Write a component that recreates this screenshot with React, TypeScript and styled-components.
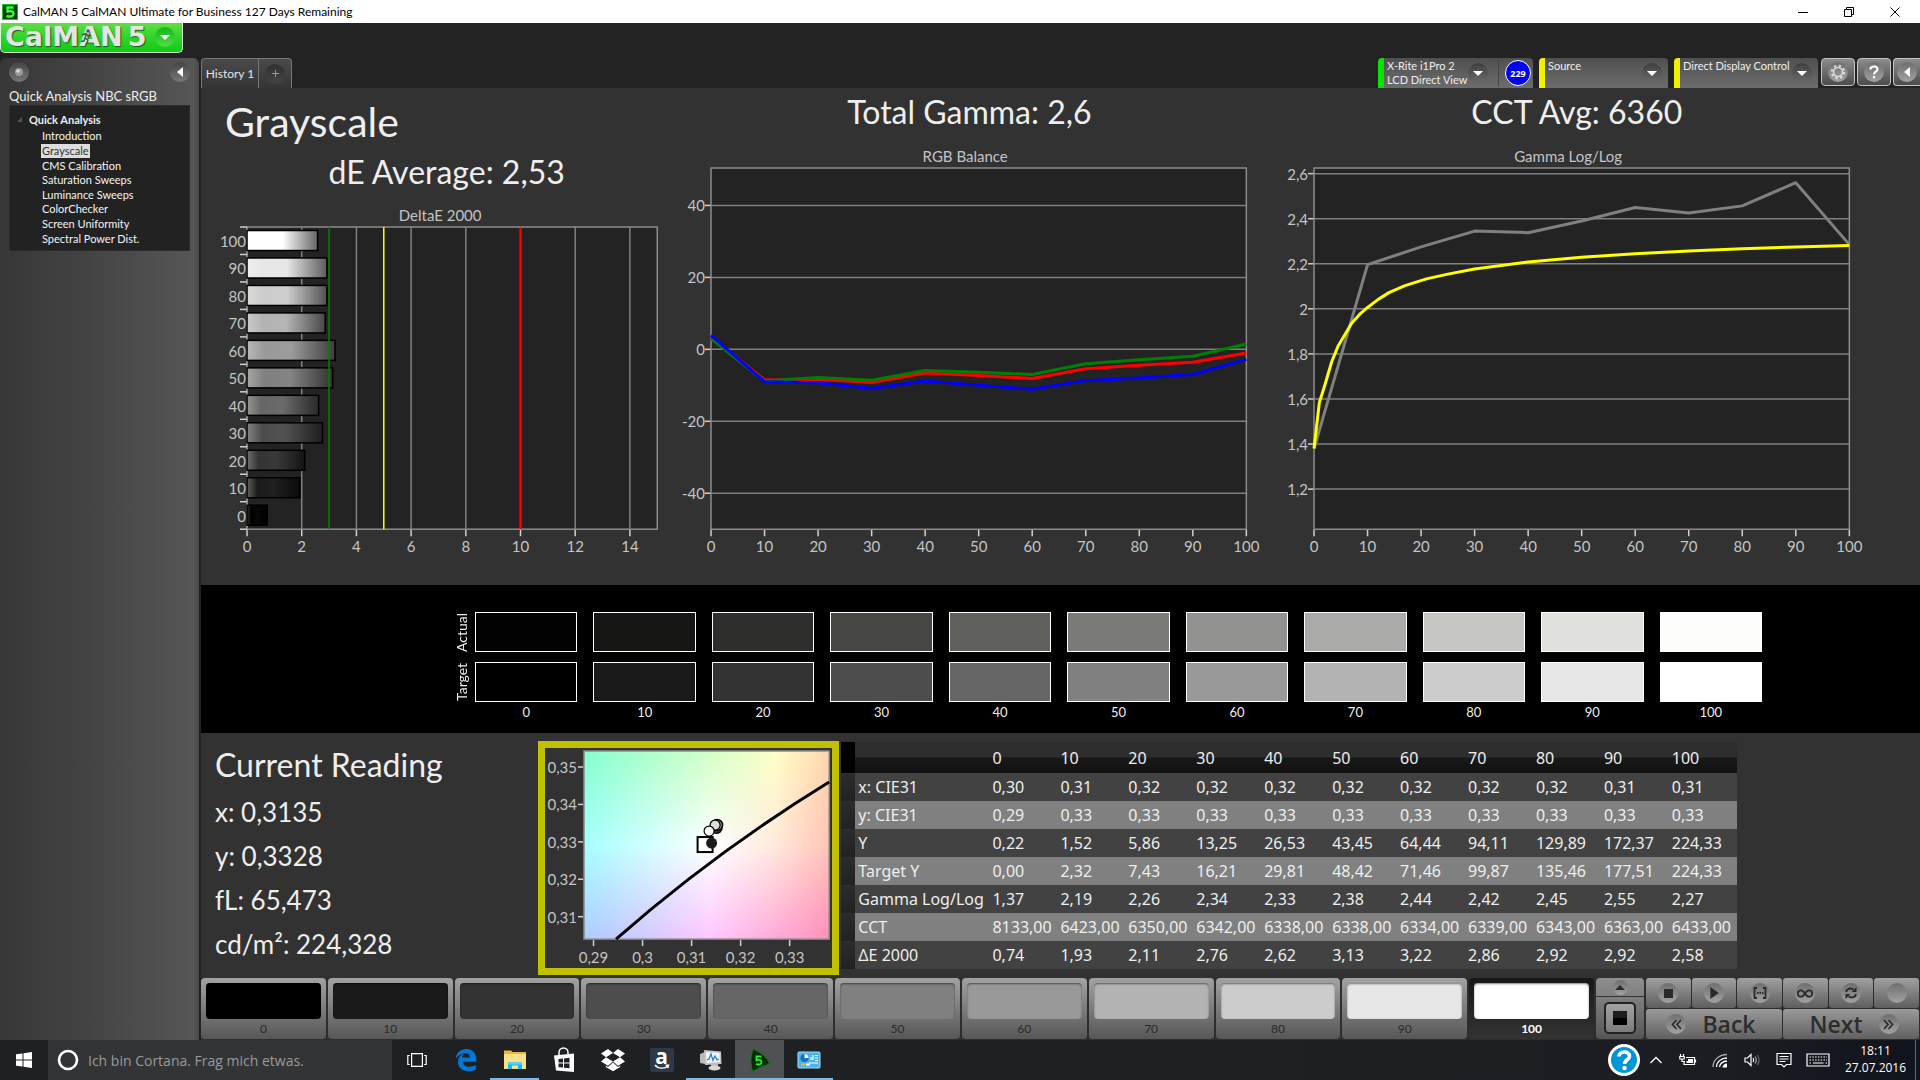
import React from 'react';
import styled, { createGlobalStyle } from 'styled-components';

const UI = `Lato, "Open Sans", "Liberation Sans", sans-serif`;
const SYS = `"Open Sans", "Noto Sans", "Liberation Sans", sans-serif`;

const GlobalStyle = createGlobalStyle`
  *, *::before, *::after { box-sizing: border-box; }
  body { margin: 0; background: #232323; color: #eee; font-family: ${UI}; }
  button { font: inherit; color: inherit; padding: 0; border: 0; background: none; cursor: pointer; }
  h1, h2, h3, p, ul { margin: 0; padding: 0; font-weight: 400; }
  ul { list-style: none; }
  svg { display: block; }
`;

/* ---------- data ---------- */

const LEVELS = [0, 10, 20, 30, 40, 50, 60, 70, 80, 90, 100];
const TARGET = ['#000000', '#1a1a1a', '#333333', '#4d4d4d', '#666666', '#808080', '#999999', '#b3b3b3', '#cccccc', '#e6e6e6', '#ffffff'];
const ACTUAL = ['#020202', '#161614', '#2e2e2c', '#464643', '#60605d', '#7a7a77', '#929290', '#aaaba8', '#c6c7c2', '#e0e1dc', '#fdfdfb'];
const DELTA_E = [0.74, 1.93, 2.11, 2.76, 2.62, 3.13, 3.22, 2.86, 2.92, 2.92, 2.58];

const RED = [3.4, -8.5, -8.3, -9.2, -6.6, -7.3, -8.1, -5.4, -4.4, -3.6, -1];
const GREEN = [3, -8.8, -7.8, -8.6, -5.9, -6.4, -7, -4, -2.9, -1.9, 1.5];
const BLUE = [3.9, -9, -9.3, -10.9, -8.8, -10, -11.1, -8.7, -8, -7, -2.8];
const GAMMA = [1.38, 2.196, 2.275, 2.345, 2.338, 2.39, 2.45, 2.425, 2.457, 2.56, 2.285];
const GAMMA_TARGET: [number, number][] = [
  [0, 1.38], [1, 1.585], [2, 1.66], [3.3, 1.765], [4.5, 1.835], [5.5, 1.875], [7, 1.935], [8.5, 1.975], [10, 2.006], [12, 2.042],
  [14, 2.072], [17, 2.103], [21, 2.133], [25, 2.154], [30, 2.177], [40, 2.208], [50, 2.229], [60, 2.245],
  [70, 2.257], [80, 2.267], [90, 2.275], [100, 2.281],
];

const READINGS = ['x: 0,3135', 'y: 0,3328', 'fL: 65,473', 'cd/m²: 224,328'];

const ROWS: [string, string[]][] = [
  ['x: CIE31', ['0,30', '0,31', '0,32', '0,32', '0,32', '0,32', '0,32', '0,32', '0,32', '0,31', '0,31']],
  ['y: CIE31', ['0,29', '0,33', '0,33', '0,33', '0,33', '0,33', '0,33', '0,33', '0,33', '0,33', '0,33']],
  ['Y', ['0,22', '1,52', '5,86', '13,25', '26,53', '43,45', '64,44', '94,11', '129,89', '172,37', '224,33']],
  ['Target Y', ['0,00', '2,32', '7,43', '16,21', '29,81', '48,42', '71,46', '99,87', '135,46', '177,51', '224,33']],
  ['Gamma Log/Log', ['1,37', '2,19', '2,26', '2,34', '2,33', '2,38', '2,44', '2,42', '2,45', '2,55', '2,27']],
  ['CCT', ['8133,00', '6423,00', '6350,00', '6342,00', '6338,00', '6338,00', '6334,00', '6339,00', '6343,00', '6363,00', '6433,00']],
  ['ΔE 2000', ['0,74', '1,93', '2,11', '2,76', '2,62', '3,13', '3,22', '2,86', '2,92', '2,92', '2,58']],
];

const PAGES = ['Introduction', 'Grayscale', 'CMS Calibration', 'Saturation Sweeps', 'Luminance Sweeps', 'ColorChecker', 'Screen Uniformity', 'Spectral Power Dist.'];

/* ---------- frame ---------- */

const Page = styled.div`
  min-height: 100vh;
  display: flex;
  flex-direction: column;
`;

const TitleBar = styled.header`
  height: 23px;
  display: flex;
  align-items: center;
  padding: 0 2px;
  background: #fff;
  color: #000;
  font-size: 12px;
`;

const WindowTitle = styled.span`
  flex: 1;
  padding-left: 5px;
`;

const WindowButton = styled.button`
  width: 46px;
  height: 22px;
  display: grid;
  place-items: center;
`;

const Brand = styled.div`
  height: 35px;
`;

const LogoButton = styled.button`
  position: relative;
  width: 183px;
  height: 30px;
  display: flex;
  align-items: center;
  gap: 5px;
  padding: 0 7px 2px 4px;
  border: 1px solid #d8f5d8;
  border-top: 0;
  border-radius: 0 0 5px 5px;
  background: linear-gradient(#63dd45, #2fd42a 50%, #10cc14);
`;

const LogoText = styled.span`
  font: 700 27px/27px "DejaVu Sans", sans-serif;
  color: #e4e4e4;
  text-shadow: 1px 1px 1px #1a5a1a;
`;

const LogoArrow = styled.span`
  width: 20px;
  height: 20px;
  display: grid;
  place-items: center;
  margin-left: auto;
  border-radius: 50%;
  background: linear-gradient(#0fb61c, #53de46);
`;

const Runner = styled.svg`
  position: absolute;
  left: 79px;
  top: 6px;
`;

const Workspace = styled.div`
  flex: 1;
  display: grid;
  grid-template-columns: 199px minmax(0, 1fr);
  gap: 2px;
`;

/* ---------- sidebar ---------- */

const Sidebar = styled.aside`
  padding: 4px 9px 0;
  border-radius: 6px 6px 0 0;
  background: linear-gradient(90deg, #373737, #444 45%, #565656 97%, #4a4a4a);
`;

const SidebarTools = styled.div`
  display: flex;
  justify-content: space-between;
`;

const RoundButton = styled.button`
  width: 20px;
  height: 20px;
  flex: none;
  display: grid;
  place-items: center;
  border-radius: 50%;
  background: linear-gradient(#444, #777);
`;

const SidebarTitle = styled.h2`
  padding: 6px 0 1px;
  font-size: 13px;
  line-height: 16px;
  white-space: nowrap;
`;

const Tree = styled.nav`
  height: 146px;
  padding: 7px 0 0;
  background: #222;
  border: 1px solid #2c2c2c;
  font-size: 11px;
  line-height: 14px;
`;

const TreeRoot = styled.div`
  display: flex;
  align-items: center;
  gap: 6px;
  padding-left: 7px;
  height: 14px;
  font-weight: 700;
`;

const TreeList = styled.ul`
  height: 117px;
  display: grid;
  grid-template-rows: repeat(8, 1fr);
  align-items: center;
  margin-top: 2px;
  padding-left: 31px;
`;

const TreeItem = styled.li`
  display: flex;
`;

const TreeLink = styled.a<{ $current: boolean }>`
  padding: 0 1px;
  color: ${(p) => (p.$current ? '#333' : '#f4f4f4')};
  background: ${(p) => (p.$current ? '#ddd' : 'transparent')};
  text-decoration: none;
`;

/* ---------- tabs and device selectors ---------- */

const Main = styled.main`
  display: flex;
  flex-direction: column;
  min-width: 0;
`;

const TopRow = styled.div`
  height: 30px;
  display: flex;
  align-items: flex-start;
  justify-content: space-between;
`;

const Tabs = styled.div`
  height: 30px;
  display: flex;
  border: 1px solid #777;
  border-bottom: 0;
  border-radius: 4px 4px 0 0;
  background: linear-gradient(#4a4a4a, #353535);
`;

const Tab = styled.button`
  width: 57px;
  font-size: 12px;
  color: #e4e4e4;
  border-right: 1px solid #777;
`;

const AddTab = styled.button`
  width: 32px;
  display: grid;
  place-items: center;
`;

const AddDisc = styled.span`
  width: 20px;
  height: 20px;
  display: grid;
  place-items: center;
  border-radius: 50%;
  background: linear-gradient(#303030, #444);
`;

const Devices = styled.div`
  display: flex;
  align-items: flex-start;
`;

const Device = styled.div<{ $accent: string; $width: number }>`
  width: ${(p) => p.$width}px;
  height: 30px;
  display: flex;
  align-items: center;
  margin-right: 6px;
  border-left: 6px solid ${(p) => p.$accent};
  border-radius: 4px 4px 0 0;
  background: linear-gradient(#505050, #6c6c6c);
  &:last-of-type { margin-right: 3px; }
`;

const DeviceButton = styled.button`
  flex: 1;
  height: 30px;
  display: flex;
  align-items: center;
  justify-content: space-between;
  padding: 0 6px 0 3px;
  text-align: left;
  font-size: 11px;
  line-height: 14px;
  white-space: nowrap;
`;

const DeviceName = styled.span`
  align-self: flex-start;
  padding-top: 1px;
`;

const ArrowDisc = styled.span`
  width: 20px;
  height: 20px;
  flex: none;
  display: grid;
  place-items: center;
  border-radius: 50%;
  background: linear-gradient(#404040, #6a6a6a);
`;

const Counter = styled.span`
  width: 26px;
  height: 26px;
  display: grid;
  place-items: center;
  margin: 0 2px 0 6px;
  border: 1px solid #fff;
  border-radius: 50%;
  background: #0000f4;
  font: 700 9px ${SYS};
  color: #fff;
`;

const CounterSlot = styled.span`
  margin-left: 4px;
  border-left: 1px solid #444;
`;

const ToolButton = styled.button<{ $open?: boolean }>`
  width: ${(p) => (p.$open ? 27 : 34)}px;
  height: 28px;
  display: grid;
  place-items: center;
  margin-right: ${(p) => (p.$open ? 0 : 2)}px;
  border: 1px solid #c4c4c4;
  border-right-width: ${(p) => (p.$open ? 0 : 1)}px;
  border-radius: ${(p) => (p.$open ? '4px 0 0 4px' : '4px')};
  background: linear-gradient(#8c8c8c, #4c4c4c);
`;

/* ---------- charts ---------- */

const Charts = styled.section`
  display: grid;
  grid-template-columns: 467fr 602fr 612fr;
  align-items: end;
  padding: 0 37px 21px 0;
  background: #323232;
`;

const Panel = styled.div`
  min-width: 0;
`;

const PageTitle = styled.h1`
  padding: 0 0 2px 24px;
  font-size: 41px;
  line-height: 48px;
`;

const Headline = styled.h2<{ $indent?: number }>`
  margin: 4px 0 12px;
  padding-left: ${(p) => p.$indent ?? 0}px;
  font-size: 32px;
  line-height: 40px;
  text-align: center;
`;

const Plot = styled.svg`
  width: 100%;
  height: auto;
  font-family: ${UI};
  font-size: 15px;
  fill: #c4c4c4;
`;

/* ---------- swatches ---------- */

const Swatches = styled.section`
  display: flex;
  flex-direction: column;
  gap: 10px;
  padding: 27px 158px 11px 252px;
  background: #000;
`;

const SwatchRow = styled.div`
  display: flex;
  gap: 4px;
`;

const SideLabel = styled.span`
  width: 18px;
  height: 40px;
  writing-mode: vertical-rl;
  transform: rotate(180deg);
  font-size: 14px;
  line-height: 18px;
  text-align: center;
`;

const SwatchCells = styled.div`
  flex: 1;
  display: grid;
  grid-template-columns: repeat(11, 1fr);
  column-gap: 16px;
  font-size: 13px;
  line-height: 20px;
  text-align: center;
`;

const Swatch = styled.div<{ $fill: string }>`
  height: 40px;
  border: 1px solid #fff;
  background: ${(p) => p.$fill};
`;

/* ---------- readings ---------- */

const Lower = styled.section`
  flex: 1;
  display: grid;
  grid-template-columns: 337fr 301fr 2fr 895fr 183fr;
  align-items: start;
  padding: 8px 0 2px;
  background: #323232;
`;

const Readings = styled.div`
  padding-left: 14px;
`;

const ReadingTitle = styled.h2`
  font-size: 32px;
  line-height: 47px;
`;

const Reading = styled.p`
  padding-top: 4px;
  font-size: 26px;
  line-height: 40px;
`;

const CieFrame = styled.div`
  border: 7px solid #c0c000;
  background: #323232;
`;

const DataTable = styled.table`
  grid-column: 4;
  width: 100%;
  margin-top: 1px;
  table-layout: fixed;
  border-collapse: collapse;
  font: 16px/20px "Noto Sans", ${SYS};
  white-space: nowrap;
`;

const HeadRow = styled.tr`
  height: 31px;
  background: linear-gradient(#2d2d2d 0 48%, #191919 52%, #111);
  text-align: left;
  th { font-weight: 400; padding: 0 3px; }
  th:first-child { background: #000; }
`;

const DataRow = styled.tr<{ $alt: boolean }>`
  height: 28px;
  background: ${(p) => (p.$alt ? '#808080' : '#424242')};
  text-align: left;
  th, td { font-weight: 400; padding: 0 3px; }
  td:first-child { background: linear-gradient(#2c2c2c, #222); }
`;

/* ---------- pattern bar ---------- */

const PatternBar = styled.section`
  display: flex;
  gap: 2px;
  padding: 0 1px 1px 0;
  background: #2e2e2e;
`;

const Patterns = styled.div`
  flex: 1;
  display: grid;
  grid-template-columns: repeat(11, 1fr);
  gap: 2px;
`;

const Pattern = styled.button<{ $on: boolean }>`
  height: 61px;
  display: flex;
  flex-direction: column;
  padding: 5px 5px 0;
  border-radius: 4px;
  background: ${(p) => (p.$on ? 'linear-gradient(#181818, #333)' : 'linear-gradient(#a2a2a2, #7c7c7c 50%, #575757)')};
  color: ${(p) => (p.$on ? '#fff' : '#2a2a2a')};
  font-size: 12px;
  font-weight: ${(p) => (p.$on ? 700 : 400)};
  line-height: 20px;
`;

const PatternFill = styled.span<{ $fill: string }>`
  width: 100%;
  height: 36px;
  flex: none;
  border-radius: 4px;
  background: ${(p) => p.$fill};
  box-shadow: inset 0 1px 2px rgba(0, 0, 0, 0.5);
`;

const PatternLabel = styled.span`
  width: 100%;
`;

const Target = styled.div`
  width: 48px;
  height: 61px;
  display: flex;
  flex-direction: column;
  border-radius: 4px;
  overflow: hidden;
  background: linear-gradient(#8e8e8e, #808080 30%, #565656);
`;

const TargetUp = styled.button`
  height: 19px;
  display: grid;
  place-items: center;
  border-bottom: 1px solid #333;
`;

const TargetStop = styled.button`
  width: 32px;
  height: 32px;
  display: grid;
  place-items: center;
  margin: 5px auto 0;
  border: 2px solid #222;
  border-radius: 5px;
  background: linear-gradient(#a2a2a2, #7c7c7c);
`;

const Transport = styled.div`
  width: 273px;
  display: grid;
  grid-template-columns: repeat(6, 1fr);
  gap: 1px;
`;

const TransportButton = styled.button`
  height: 30px;
  display: grid;
  place-items: center;
  border-radius: 3px;
  background: linear-gradient(#a0a0a0, #5e5e5e);
  color: #2a2a2a;
`;

const StepButton = styled.button<{ $next?: boolean }>`
  grid-column: span 3;
  height: 30px;
  display: flex;
  align-items: center;
  justify-content: center;
  gap: 16px;
  padding: ${(p) => (p.$next ? '0 0 0 6px' : '0 6px 0 0')};
  border-radius: 3px;
  background: linear-gradient(#9a9a9a, #606060);
  color: #2d2d2d;
  font: 600 23px/28px ${SYS};
`;

const Disc = styled.span<{ $size?: number }>`
  width: ${(p) => p.$size ?? 20}px;
  height: ${(p) => p.$size ?? 20}px;
  display: grid;
  place-items: center;
  border-radius: 50%;
  background: linear-gradient(#6e6e6e, #a2a2a2);
`;

/* ---------- taskbar ---------- */

const Taskbar = styled.footer`
  height: 40px;
  display: flex;
  align-items: stretch;
  background: linear-gradient(90deg, #1f2023 60%, #1b1d22 90%, #10141c);
  font-family: ${SYS};
`;

const StartButton = styled.button`
  width: 48px;
  display: grid;
  place-items: center;
`;

const Search = styled.label`
  width: 344px;
  display: flex;
  align-items: center;
  gap: 9px;
  padding-left: 9px;
  background: #333436;
`;

const SearchInput = styled.input`
  flex: 1;
  min-width: 0;
  padding: 0;
  border: 0;
  outline: 0;
  background: none;
  color: #999;
  font: 14px ${SYS};
  &::placeholder { color: #9a9a9a; opacity: 1; }
`;

const Apps = styled.div`
  flex: 1;
  display: flex;
`;

const AppButton = styled.button<{ $state?: 'open' | 'active' }>`
  width: 49px;
  display: grid;
  place-items: center;
  padding-top: 2px;
  background: ${(p) => (p.$state === 'active' ? '#505153' : 'transparent')};
  border-bottom: 2px solid ${(p) => (p.$state ? '#76b9ed' : 'transparent')};
  background-clip: padding-box;
`;

const Tray = styled.div`
  display: flex;
  margin-right: 4px;
  border-right: 1px solid #666;
`;

const TrayButton = styled.button`
  width: 32px;
  display: grid;
  place-items: center;
  &:last-of-type { width: 36px; }
`;

const Clock = styled.time`
  width: 79px;
  padding-top: 2px;
  font-size: 12px;
  line-height: 17px;
  text-align: center;
  color: #fff;
`;

/* ---------- small drawings ---------- */

const Triangle = ({ dir = 'down', color = '#fff', w = 10 }: { dir?: 'down' | 'left' | 'up' | 'right'; color?: string; w?: number }) => {
  const d = { down: 'M0 3H10L5 8Z', up: 'M0 8H10L5 3Z', left: 'M8 0V10L2 5Z', right: 'M2 0V10L9 5Z' }[dir];
  return (
    <svg width={w} height={w} viewBox="0 0 10 10"><path d={d} fill={color} /></svg>
  );
};

/* ---------- charts ---------- */

type Box = { l: number; r: number; t: number; b: number };

const Frame = ({ box }: { box: Box }) => (
  <rect x={box.l} y={box.t} width={box.r - box.l} height={box.b - box.t} fill="none" stroke="#8c8c8c" strokeWidth="1.5" />
);

const mix = (hex: string, to: number, k: number) => {
  const v = parseInt(hex.slice(1, 3), 16);
  const m = Math.round(v + (to - v) * k);
  return `rgb(${m},${m},${m})`;
};

function DeltaChart() {
  const box = { l: 46, r: 456, t: 23, b: 325 };
  const unit = (box.r - box.l) / 15;
  const slot = (box.b - box.t) / 11;
  const x = (v: number) => box.l + v * unit;
  return (
    <Plot viewBox="0 0 467 360" role="img" aria-label="DeltaE 2000">
      <defs>
        {TARGET.map((c, i) => (
          <linearGradient key={c} id={`bar${i}`}>
            <stop offset="0" stopColor={mix(c, 255, i ? 0.3 : 0.2)} />
            <stop offset="0.2" stopColor={c} />
            <stop offset="0.5" stopColor={mix(c, 255, 0.03)} />
            <stop offset="1" stopColor={mix(c, 0, 0.6)} />
          </linearGradient>
        ))}
      </defs>
      <text x="239" y="17" textAnchor="middle">DeltaE 2000</text>
      <rect x={box.l} y={box.t} width={box.r - box.l} height={box.b - box.t} fill="#232323" />
      {[0, 2, 4, 6, 8, 10, 12, 14].map((v) => (
        <g key={v}>
          <path d={`M${x(v)} ${box.t}V${box.b}`} stroke="#808080" strokeWidth="1.5" />
          <path d={`M${x(v)} ${box.b}v7`} stroke="#d0d0d0" strokeWidth="1.5" />
          <text x={x(v)} y="348" textAnchor="middle">{v}</text>
        </g>
      ))}
      <Frame box={box} />
      {LEVELS.map((level, i) => {
        const top = box.t + (10 - i) * slot;
        return (
          <g key={level}>
            <path d={`M${box.l - 7} ${top}h7`} stroke="#d0d0d0" strokeWidth="1.5" />
            <rect x={box.l} y={top + 3.5} width={DELTA_E[i] * unit} height="20" fill={`url(#bar${i})`} stroke="#000" strokeWidth="1.5" />
            <text x={box.l - 1} y={top + 20} textAnchor="end">{level}</text>
          </g>
        );
      })}
      <path d={`M${box.l - 7} ${box.b}h7`} stroke="#d0d0d0" strokeWidth="1.5" />
      <path d={`M${x(3)} ${box.t}V${box.b}`} stroke="#008000" strokeWidth="1.5" />
      <path d={`M${x(5)} ${box.t}V${box.b}`} stroke="#ffff00" strokeWidth="1.5" />
      <path d={`M${x(10)} ${box.t}V${box.b}`} stroke="#ff0000" strokeWidth="1.2" />
    </Plot>
  );
}

type Line = { color: string; points: [number, number][]; width: number };

type LineChartProps = { title: string; width: number; min: number; max: number; ticks: number[]; lines: Line[] };

function LineChart({ title, width, min, max, ticks, lines }: LineChartProps) {
  const box = { l: 43, r: 578, t: 24, b: 385 };
  const x = (v: number) => box.l + ((box.r - box.l) * v) / 100;
  const y = (v: number) => box.b - ((box.b - box.t) * (v - min)) / (max - min);
  return (
    <Plot viewBox={`0 0 ${width} 420`} role="img" aria-label={title}>
      <text x="297" y="18" textAnchor="middle">{title}</text>
      <rect x={box.l} y={box.t} width={box.r - box.l} height={box.b - box.t} fill="#232323" />
      {ticks.map((v) => (
        <g key={v}>
          <path d={`M${box.l} ${y(v)}H${box.r}`} stroke="#808080" strokeWidth="1.5" />
          <path d={`M${box.l - 6} ${y(v)}h6`} stroke="#d0d0d0" strokeWidth="1.5" />
          <text x={box.l - 6} y={y(v) + 6} textAnchor="end">{String(v).replace('.', ',')}</text>
        </g>
      ))}
      {LEVELS.map((v) => (
        <g key={v}>
          <path d={`M${x(v)} ${box.b}v7`} stroke="#d0d0d0" strokeWidth="1.5" />
          <text x={x(v)} y="408" textAnchor="middle">{v}</text>
        </g>
      ))}
      <Frame box={box} />
      {lines.map((l) => (
        <polyline key={l.color} points={l.points.map(([a, b]) => `${x(a)},${y(b)}`).join(' ')} fill="none" stroke={l.color} strokeWidth={l.width} strokeLinejoin="round" />
      ))}
    </Plot>
  );
}

const byLevel = (values: number[]): [number, number][] => values.map((v, i) => [LEVELS[i], v]);

const CIE_COLUMNS = [
  { at: 0, stops: ['#86ffd0', '#a6ffff', '#aeccff'] },
  { at: 0.52, stops: ['#d4ffc6', '#ffffff', '#ffc6ff'] },
  { at: 0.78, stops: ['#ffffc6', '#ffe9dd', '#ffaad8'] },
  { at: 1, stops: ['#ffd6ae', '#ffc4b4', '#ff8fbc'] },
];

function CieChart() {
  const box = { l: 39, r: 284, t: 3, b: 191 };
  const w = box.r - box.l;
  return (
    <Plot viewBox="0 0 287 220" role="img" aria-label="CIE chart">
      <defs>
        {CIE_COLUMNS.map((c, i) => (
          <React.Fragment key={c.at}>
            <linearGradient id={`cie${i}`} x1="0" y1="0" x2="0" y2="1">
              {c.stops.map((s, k) => <stop key={s} offset={k / 2} stopColor={s} />)}
            </linearGradient>
            {i > 0 && (
              <>
                <linearGradient id={`fade${i}`}>
                  <stop offset={CIE_COLUMNS[i - 1].at} stopColor="#fff" stopOpacity="0" />
                  <stop offset={c.at} stopColor="#fff" stopOpacity="1" />
                </linearGradient>
                <mask id={`mask${i}`}>
                  <rect x={box.l} y={box.t} width={w} height={box.b - box.t} fill={`url(#fade${i})`} />
                </mask>
              </>
            )}
          </React.Fragment>
        ))}
      </defs>
      {CIE_COLUMNS.map((c, i) => (
        <rect key={c.at} x={box.l} y={box.t} width={w} height={box.b - box.t} fill={`url(#cie${i})`} mask={i ? `url(#mask${i})` : undefined} />
      ))}
      <Frame box={box} />
      {['0,35', '0,34', '0,33', '0,32', '0,31'].map((t, i) => (
        <g key={t}>
          <path d={`M${box.l - 6} ${19 + i * 37.4}h5`} stroke="#d0d0d0" strokeWidth="1.5" />
          <text x={box.l - 7} y={25 + i * 37.4} textAnchor="end">{t}</text>
        </g>
      ))}
      {['0,29', '0,3', '0,31', '0,32', '0,33'].map((t, i) => (
        <g key={t}>
          <path d={`M${48.5 + i * 49} ${box.b + 1}v6`} stroke="#d0d0d0" strokeWidth="1.5" />
          <text x={48.5 + i * 49} y="215" textAnchor="middle">{t}</text>
        </g>
      ))}
      <path d="M71 191Q170 104 284 34" fill="none" stroke="#000" strokeWidth="3" />
      <rect x="152.5" y="89" width="15" height="15" fill="#fff" stroke="#000" strokeWidth="2" />
      <circle cx="166.5" cy="95" r="5.5" fill="#1a1a1a" />
      <circle cx="171.5" cy="80" r="5.5" fill="#333" stroke="#000" />
      <circle cx="172" cy="77" r="5.5" fill="#999" stroke="#000" strokeWidth="1.5" />
      <circle cx="170" cy="77" r="5" fill="#ddd" stroke="#000" strokeWidth="1.2" />
      <circle cx="164" cy="83" r="5" fill="#fff" stroke="#000" strokeWidth="1.2" />
    </Plot>
  );
}

/* ---------- taskbar icons ---------- */

const TaskView = () => (
  <svg width="20" height="16" viewBox="0 0 20 16" fill="none" stroke="#fff" strokeWidth="1.2">
    <path d="M4.6 1.6H15.4V14.4H4.6ZM2.8 3.5H.8V12.5H2.8M17.2 3.5H19.2V12.5H17.2" />
  </svg>
);
const Edge = () => (
  <svg width="22" height="24" viewBox="0 0 22 24">
    <path d="M.7 10.6C1.500 4.500 5.800 1 11.200 1 17.500 1 21.300 5.500 21.300 11v2.700H7.600c.2 3.400 3.300 5 6.800 5 2.500 0 4.500-.6 6.300-1.700v4.600c-2 1-4.400 1.500-7.200 1.500C6.800 23.100 3 19.200 3 14c0-3.900 2.100-7.200 5.700-8.900-1 1.200-1.500 2.600-1.700 4.400h7.900c0-2.900-1.300-4.600-4.400-4.600-3.700 0-7.300 2.300-9.800 5.700Z" fill="#0078d7" />
  </svg>
);
const Explorer = () => (
  <svg width="24" height="22" viewBox="0 0 24 22">
    <path d="M1 3V1.500h7L9.500 3H23v17H1Z" fill="#e8b73a" /><path d="M1 5h22v15H1Z" fill="#fbe08a" />
    <path d="M5 20v-7h14v7h-4v-3.500H9V20Z" fill="#18b9f2" /><path d="M5 13h14v2.500H5Z" fill="#59d2fb" />
  </svg>
);
const Store = () => (
  <svg width="22" height="26" viewBox="0 0 22 26">
    <path d="M6 8V5.500C6 3 7.800 1 10.500 1S15 3 15 5.500V7" fill="none" stroke="#fff" strokeWidth="1.5" />
    <path d="M1 8.500 21 6.500V25L3 23.500Z" fill="#fff" />
    <path d="M5.500 12 10 11.500V15.500H5.500ZM11 11.400 16.500 10.800V15.500H11ZM5.500 16.500H10V20.600L5.500 20.200ZM11 16.500H16.500V21.300L11 20.800Z" fill="#1f2023" />
  </svg>
);
const Dropbox = () => (
  <svg width="24" height="24" viewBox="0 0 24 24" fill="#fff">
    <path d="M7 1 12 5 5 9.300 0 5.400ZM17 1 24 5.400 19 9.300 12 5ZM0 13.400 5 9.300 12 13.600 7 17.700ZM24 13.400 19 9.300 12 13.600 17 17.700ZM12 14.600 17 18.900 19.200 17.500V19L12 23.300 4.800 19V17.500L7 18.900Z" />
  </svg>
);
const AmazonTile = styled.span`
  width: 24px;
  height: 24px;
  display: flex;
  flex-direction: column;
  align-items: center;
  border-radius: 2px;
  background: #2f3845;
  color: #fff;
  font: 700 21px/16px ${SYS};
`;
const Amazon = () => (
  <AmazonTile>a<svg width="16" height="6" viewBox="0 0 16 6" fill="none" stroke="#fff" strokeWidth="1.4"><path d="M1 1C4 5 11 5 14 2M11.500 1.200 14.500 1.200 13.800 4" /></svg></AmazonTile>
);
const Monitor = () => (
  <svg width="24" height="22" viewBox="0 0 24 22">
    <path d="M1 5 6 3v12l-5-1Z" fill="#b9b9b9" /><path d="M5 1 22 2.500 22.500 15 6 16Z" fill="#c4c4c4" />
    <path d="M7 3 20.500 4 21 13 7.500 14Z" fill="#f4f8fb" />
    <path d="M8 11 10 10 12 5 14 11.500 16 7 18 11 20 10" fill="none" stroke="#2b7fc4" strokeWidth="1.3" />
    <path d="M12 15h7v4h-7Z" fill="#bdbdbd" /><ellipse cx="15.5" cy="19" rx="6" ry="2.4" fill="#d8d8d8" />
  </svg>
);
const CalmanTriangle = () => (
  <svg width="22" height="24" viewBox="0 0 22 24">
    <path d="M4 1Q18 7 20.500 16 12 18 3.500 23.500 0 12 4 1Z" fill="#052b08" stroke="#0d7a18" strokeWidth="1" />
    <path d="M12.500 8.500H7.500V12.200C10 11 12.500 11.800 12.500 14 12.500 16.500 9.500 17.300 7 15.800" fill="none" stroke="#1df02c" strokeWidth="1.9" />
  </svg>
);
const ControlPanel = () => (
  <svg width="24" height="18" viewBox="0 0 24 18">
    <rect x="1" y="1" width="22" height="16" rx="1" fill="#4ab5ec" stroke="#a6dcf8" />
    <circle cx="7.5" cy="7" r="4" fill="#1b6fb8" /><path d="M7.500 7V3A4 4 0 0 1 11.500 7Z" fill="#fff" />
    <path d="M14 9V6M16 9V4M18 4.500h3M18 7h3M18 9.500h3M12 12h9" stroke="#fff" strokeWidth="1.2" />
    <path d="M4 13.500h4" stroke="#ffb020" strokeWidth="2" /><path d="M9 13.500h4" stroke="#fff" strokeWidth="2" />
  </svg>
);

const APPS: { name: string; icon: React.ReactNode; state?: 'open' | 'active' }[] = [
  { name: 'Task View', icon: <TaskView /> },
  { name: 'Edge', icon: <Edge /> },
  { name: 'Explorer', icon: <Explorer />, state: 'open' },
  { name: 'Store', icon: <Store /> },
  { name: 'Dropbox', icon: <Dropbox /> },
  { name: 'Amazon', icon: <Amazon /> },
  { name: 'Monitor', icon: <Monitor />, state: 'open' },
  { name: 'CalMAN', icon: <CalmanTriangle />, state: 'active' },
  { name: 'Control Panel', icon: <ControlPanel />, state: 'open' },
];

const TRAY: [string, React.ReactNode][] = [
  ['Help', <svg width="32" height="32" viewBox="0 0 32 32"><circle cx="16" cy="16" r="14.5" fill="#0096d6" stroke="#fff" strokeWidth="3" /><path d="M11 12.500C11 6.500 21.500 6.500 21.500 12.200 21.500 16 16.500 15.500 16.500 20" fill="none" stroke="#fff" strokeWidth="3.5" /><circle cx="16.5" cy="24" r="2.2" fill="#fff" /></svg>],
  ['Show hidden icons', <svg width="14" height="8" viewBox="0 0 14 8" fill="none" stroke="#fff" strokeWidth="1.3"><path d="M1.500 7 7 1.500 12.500 7" /></svg>],
  ['Battery', <svg width="18" height="12" viewBox="0 0 18 12" fill="none" stroke="#fff" strokeWidth="1.2"><path d="M7 3.500H15.500V10.500H5V8M16.500 5.500v3M1.500 0V2.500M4.500 0V2.500M.8 2.500H5.200V5H.8ZM3 5V7.500H6" /><path d="M9 5h5v4H7.500V7H9Z" fill="#fff" stroke="none" /></svg>],
  ['Network', <svg width="16" height="15" viewBox="0 0 16 15" fill="none" stroke="#fff" strokeWidth="1.3"><path d="M1 14C1 7 7 1.500 15 1.500" stroke="#aaa" /><path d="M4.500 14C4.500 9 9 5 15 5M7.500 14C7.500 11 11 8 15 8" /><path d="M10.500 14.500C10.500 12.500 12.500 10.500 15 10.500V14.500Z" fill="#fff" stroke="none" /></svg>],
  ['Volume', <svg width="17" height="14" viewBox="0 0 17 14" fill="none" stroke="#fff" strokeWidth="1.2"><path d="M1 5H3.500L7 1.500V12.500L3.500 9H1ZM9 5Q10.500 7 9 9" /><path d="M11 3.500Q13.500 7 11 10.500" stroke="#aaa" /><path d="M13.200 2Q17 7 13.200 12" stroke="#666" /></svg>],
  ['Notifications', <svg width="16" height="16" viewBox="0 0 16 16" fill="none" stroke="#fff" strokeWidth="1.2"><path d="M1 1.500H15V12.500H10.500L8 15 5.500 12.500H1ZM3.500 4.500H12.500M3.500 7H12.500M3.500 9.500H9.500" /></svg>],
  ['Keyboard', <svg width="24" height="14" viewBox="0 0 24 14" fill="none" stroke="#fff" strokeWidth="1.2"><path d="M1 1H23V13H1Z" /><path d="M3.500 4H21M3.500 7H21" strokeDasharray="1.5 1.3" /><path d="M3.500 10H5M7 10H17.500M19.500 10H21" /></svg>],
];

const TRANSPORT: [string, React.ReactNode][] = [
  ['Stop', <svg width="9" height="9"><path d="M0 0H9V9H0Z" fill="#2a2a2a" /></svg>],
  ['Play', <Triangle dir="right" color="#2a2a2a" w={12} />],
  ['Series', <svg width="14" height="12" viewBox="0 0 14 12" fill="none" stroke="#2a2a2a" strokeWidth="1.8"><path d="M4 1H1.500V11H4M10 1H12.500V11H10" /><path d="M4 6H10.500" strokeDasharray="1.6 .9" /></svg>],
  ['Continuous', <svg width="16" height="9" viewBox="0 0 16 9" fill="none" stroke="#2a2a2a" strokeWidth="1.8"><path d="M8 4.500C6.500 2 5.500 1.300 4 1.300A3.200 3.200 0 0 0 4 7.700C5.500 7.700 6.500 7 8 4.500S10.500 1.300 12 1.300A3.200 3.200 0 0 1 12 7.700C10.500 7.700 9.500 7 8 4.500Z" /></svg>],
  ['Refresh', <svg width="14" height="14" viewBox="0 0 14 14" fill="none" stroke="#2a2a2a" strokeWidth="2"><path d="M2 6C2.500 3 6 1.500 9.500 3.500M12 8C11.500 11 8 12.500 4.500 10.500" /><path d="M12.500 1V6H7.500ZM1.500 13V8H6.500Z" fill="#2a2a2a" stroke="none" /></svg>],
  ['Blank', null],
];

const Chevrons = ({ flip }: { flip?: boolean }) => (
  <svg width="11" height="11" viewBox="0 0 11 11" fill="none" stroke="#2a2a2a" strokeWidth="1.6">
    <path d={flip ? 'M1 1 5 5.500 1 10M5.500 1 9.500 5.500 5.500 10' : 'M10 1 6 5.500 10 10M5.500 1 1.500 5.500 5.500 10'} />
  </svg>
);

/* ---------- app ---------- */

export default function App() {
  return (
    <Page>
      <GlobalStyle />
      <TitleBar>
        <svg width="16" height="16" viewBox="0 0 16 16">
          <rect width="16" height="16" fill="#0a3c0c" />
          <rect x=".5" y=".5" width="15" height="15" fill="none" stroke="#18c424" />
          <path d="M11.500 3.500H5.500V7.500C9 6.500 11.500 7.500 11.500 9.800S8.500 13.500 4.500 11.800" fill="none" stroke="#35ff3f" strokeWidth="2.4" />
        </svg>
        <WindowTitle>CalMAN 5 CalMAN Ultimate for Business 127 Days Remaining</WindowTitle>
        <WindowButton aria-label="Minimize"><svg width="10" height="10"><path d="M0 5.500H10" stroke="#000" /></svg></WindowButton>
        <WindowButton aria-label="Restore"><svg width="10" height="10" fill="none" stroke="#000"><path d="M.5 2.500H7.500V9.500H.5ZM2.500 2.500V.5H9.500V7.500H7.500" /></svg></WindowButton>
        <WindowButton aria-label="Close"><svg width="10" height="10" stroke="#000"><path d="M.5 .5 9.500 9.500M9.500 .5 .5 9.500" /></svg></WindowButton>
      </TitleBar>

      <Brand>
        <LogoButton aria-label="CalMAN menu">
          <LogoText>CalMAN</LogoText>
          <LogoText>5</LogoText>
          <Runner width="12" height="16" viewBox="0 0 12 16" fill="none" stroke="#3a5f3a" strokeWidth="1.5">
            <circle cx="8" cy="2" r="1" fill="#3a5f3a" /><path d="M2 6 6 4.500 8 7 11 6.500M6.500 5 5 9 8 11 7 14M5 9 4 12 1 12.500" />
          </Runner>
          <LogoArrow><Triangle /></LogoArrow>
        </LogoButton>
      </Brand>

      <Workspace>
        <Sidebar>
          <SidebarTools>
            <RoundButton aria-label="Record">
              <svg width="10" height="10"><circle cx="5" cy="5" r="4" fill="#999" /><circle cx="4" cy="4" r="1.8" fill="#ddd" /></svg>
            </RoundButton>
            <RoundButton aria-label="Collapse"><Triangle dir="left" /></RoundButton>
          </SidebarTools>
          <SidebarTitle>Quick Analysis NBC sRGB</SidebarTitle>
          <Tree>
            <TreeRoot>
              <svg width="6" height="6"><path d="M5 0V5H0Z" fill="#555" /></svg>
              Quick Analysis
            </TreeRoot>
            <TreeList>
              {PAGES.map((p) => (
                <TreeItem key={p}><TreeLink href="#" $current={p === 'Grayscale'}>{p}</TreeLink></TreeItem>
              ))}
            </TreeList>
          </Tree>
        </Sidebar>

        <Main>
          <TopRow>
            <Tabs>
              <Tab>History 1</Tab>
              <AddTab aria-label="Add tab">
                <AddDisc><svg width="7" height="7" stroke="#999"><path d="M3.500 0V7M0 3.500H7" /></svg></AddDisc>
              </AddTab>
            </Tabs>
            <Devices>
              <Device $accent="#00e800" $width={155}>
                <DeviceButton aria-haspopup="menu">
                  <DeviceName>X-Rite i1Pro 2<br />LCD Direct View</DeviceName>
                  <ArrowDisc><Triangle /></ArrowDisc>
                </DeviceButton>
                <CounterSlot><Counter>229</Counter></CounterSlot>
              </Device>
              <Device $accent="#f0f000" $width={129}>
                <DeviceButton aria-haspopup="menu"><DeviceName>Source</DeviceName><ArrowDisc><Triangle /></ArrowDisc></DeviceButton>
              </Device>
              <Device $accent="#f0f000" $width={144}>
                <DeviceButton aria-haspopup="menu"><DeviceName>Direct Display Control</DeviceName><ArrowDisc><Triangle /></ArrowDisc></DeviceButton>
              </Device>
              <ToolButton aria-label="Settings">
                <Disc>
                  <svg width="16" height="16" viewBox="0 0 16 16" fill="none" stroke="#ddd">
                    <circle cx="8" cy="8" r="4.5" strokeWidth="1.6" />
                    <circle cx="8" cy="8" r="6.3" strokeWidth="2" strokeDasharray="2.4 2.548" />
                  </svg>
                </Disc>
              </ToolButton>
              <ToolButton aria-label="Help">
                <Disc>
                  <svg width="10" height="14" viewBox="0 0 10 14" fill="none" stroke="#fff" strokeWidth="2.2"><path d="M1.500 4.500C1.500 .5 8.500 .5 8.500 4.300 8.500 6.800 5 6.600 5 9.500M5 11V13.200" /></svg>
                </Disc>
              </ToolButton>
              <ToolButton $open aria-label="Collapse"><Disc><Triangle dir="left" /></Disc></ToolButton>
            </Devices>
          </TopRow>

          <Charts>
            <Panel>
              <PageTitle>Grayscale</PageTitle>
              <Headline $indent={24}>dE Average: 2,53</Headline>
              <DeltaChart />
            </Panel>
            <Panel>
              <Headline>Total Gamma: 2,6</Headline>
              <LineChart
                title="RGB Balance" width={602} min={-50} max={50.4} ticks={[40, 20, 0, -20, -40]}
                lines={[
                  { color: '#ff0000', points: byLevel(RED), width: 3 },
                  { color: '#008000', points: byLevel(GREEN), width: 3 },
                  { color: '#0000ff', points: byLevel(BLUE), width: 3 },
                ]}
              />
            </Panel>
            <Panel>
              <Headline>CCT Avg: 6360</Headline>
              <LineChart
                title="Gamma Log/Log" width={612} min={1.022} max={2.625} ticks={[2.6, 2.4, 2.2, 2, 1.8, 1.6, 1.4, 1.2]}
                lines={[
                  { color: '#808080', points: byLevel(GAMMA), width: 3 },
                  { color: '#ffff00', points: GAMMA_TARGET, width: 3 },
                ]}
              />
            </Panel>
          </Charts>

          <Swatches>
            <SwatchRow>
              <SideLabel>Actual</SideLabel>
              <SwatchCells>{ACTUAL.map((c) => <Swatch key={c} $fill={c} />)}</SwatchCells>
            </SwatchRow>
            <SwatchRow>
              <SideLabel>Target</SideLabel>
              <SwatchCells>
                {TARGET.map((c) => <Swatch key={c} $fill={c} />)}
                {LEVELS.map((l) => <span key={l}>{l}</span>)}
              </SwatchCells>
            </SwatchRow>
          </Swatches>

          <Lower>
            <Readings>
              <ReadingTitle>Current Reading</ReadingTitle>
              {READINGS.map((r) => <Reading key={r}>{r}</Reading>)}
            </Readings>
            <CieFrame><CieChart /></CieFrame>
            <DataTable>
              <colgroup>
                <col style={{ width: `${1400 / 895}%` }} />
                <col style={{ width: `${13400 / 895}%` }} />
                {LEVELS.map((l) => <col key={l} />)}
              </colgroup>
              <thead>
                <HeadRow>
                  <th /><th />
                  {LEVELS.map((l) => <th key={l} scope="col">{l}</th>)}
                </HeadRow>
              </thead>
              <tbody>
                {ROWS.map(([name, cells], i) => (
                  <DataRow key={name} $alt={i % 2 === 1}>
                    <td />
                    <th scope="row">{name}</th>
                    {cells.map((c, k) => <td key={k}>{c}</td>)}
                  </DataRow>
                ))}
              </tbody>
            </DataTable>
          </Lower>

          <PatternBar>
            <Patterns>
              {LEVELS.map((l, i) => (
                <Pattern key={l} $on={l === 100}>
                  <PatternFill $fill={TARGET[i]} />
                  <PatternLabel>{l}</PatternLabel>
                </Pattern>
              ))}
            </Patterns>
            <Target>
              <TargetUp aria-label="Expand"><Disc $size={15}><Triangle dir="up" color="#2a2a2a" /></Disc></TargetUp>
              <TargetStop aria-label="Pattern window">
                <svg width="14" height="14"><path d="M0 0H14V14H0Z" fill="#000" /><path d="M0 0H14V7H0Z" fill="#1c1c1c" /></svg>
              </TargetStop>
            </Target>
            <Transport>
              {TRANSPORT.map(([name, icon]) => (
                <TransportButton key={name} aria-label={name}><Disc>{icon}</Disc></TransportButton>
              ))}
              <StepButton><Disc><Chevrons /></Disc>Back</StepButton>
              <StepButton $next>Next<Disc><Chevrons flip /></Disc></StepButton>
            </Transport>
          </PatternBar>
        </Main>
      </Workspace>

      <Taskbar>
        <StartButton aria-label="Start">
          <svg width="16" height="16" viewBox="0 0 16 16" fill="#fff"><path d="M0 2.300 6.500 1.400V7.500H0ZM7.500 1.200 16 0V7.500H7.500ZM0 8.500H6.500V14.600L0 13.700ZM7.500 8.500H16V16L7.500 14.800Z" /></svg>
        </StartButton>
        <Search>
          <svg width="22" height="22"><circle cx="11" cy="11" r="9" fill="none" stroke="#fff" strokeWidth="2.6" /></svg>
          <SearchInput aria-label="Cortana" placeholder="Ich bin Cortana. Frag mich etwas." />
        </Search>
        <Apps>
          {APPS.map((a) => <AppButton key={a.name} $state={a.state} aria-label={a.name}>{a.icon}</AppButton>)}
        </Apps>
        <Tray>
          {TRAY.map(([name, icon]) => <TrayButton key={name} aria-label={name}>{icon}</TrayButton>)}
          <Clock>18:11<br />27.07.2016</Clock>
        </Tray>
      </Taskbar>
    </Page>
  );
}
